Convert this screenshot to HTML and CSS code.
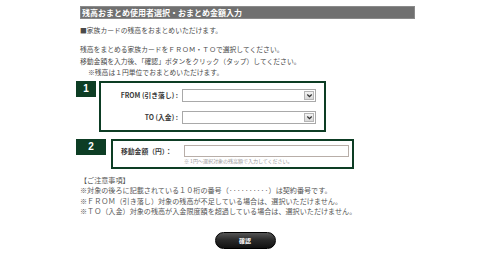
FILE: index.html
```html
<!DOCTYPE html>
<html lang="ja">
<head>
<meta charset="utf-8">
<title>残高おまとめ</title>
<link rel="stylesheet" href="styles.css">
</head>
<body>
<div class="page">
  <div class="content">
    <h1 class="title">残高おまとめ使用者選択・おまとめ金額入力</h1>
    <p class="lead">■家族カードの残高をおまとめいただけます。</p>
    <div class="intro">
      <p>残高をまとめる家族カードをＦＲＯＭ・ＴＯで選択してください。</p>
      <p>移動金額を入力後、「確認」ボタンをクリック（タップ）してください。</p>
      <p class="indent">※残高は１円単位でおまとめいただけます。</p>
    </div>

    <div class="step step1">
      <div class="badge badge1">1</div>
      <div class="box box1">
        <div class="row">
          <span class="label">FROM (引き落し) :</span>
          <div class="select"><span class="arrow"><svg viewBox="0 0 8 8" width="7" height="7"><path d="M1.5 2.8 L4 5.3 L6.5 2.8" fill="none" stroke="#333" stroke-width="1.5"/></svg></span></div>
        </div>
        <div class="row">
          <span class="label">TO (入金) :</span>
          <div class="select"><span class="arrow"><svg viewBox="0 0 8 8" width="7" height="7"><path d="M1.5 2.8 L4 5.3 L6.5 2.8" fill="none" stroke="#333" stroke-width="1.5"/></svg></span></div>
        </div>
      </div>
    </div>

    <div class="step step2">
      <div class="badge badge2">2</div>
      <div class="box box2">
        <div class="row2">
          <span class="label2">移動金額（円）：</span>
          <div class="field">
            <div class="input"></div>
            <div class="hint">※ 1円～選択対象の残高額で入力してください。</div>
          </div>
        </div>
      </div>
    </div>

    <div class="notes">
      <p>【ご注意事項】</p>
      <p>※対象の後ろに記載されている１０桁の番号（··········）は契約番号です。</p>
      <p>※ＦＲＯＭ（引き落し）対象の残高が不足している場合は、選択いただけません。</p>
      <p>※ＴＯ（入金）対象の残高が入金限度額を超過している場合は、選択いただけません。</p>
    </div>
  </div>
  <div class="actions">
    <button class="btn" type="button">確認</button>
  </div>
</div>
</body>
</html>
```
FILE: styles.css
```css
* { box-sizing: border-box; }
html, body { margin: 0; padding: 0; background: #fff; }
body {
  font-family: "Noto Sans CJK JP", "Noto Sans", "DejaVu Sans", sans-serif;
  color: #4a4a4a;
  width: 490px;
  height: 270px;
  overflow: hidden;
}
p { margin: 0; }
.page { padding-top: 6px; }
.content { margin-left: 76px; width: 360px; }
.title {
  margin: 0 0 0 4px;
  width: 335px;
  height: 13px;
  background: #707070;
  border: 1px solid #8a8a8a;
  color: #fff;
  font-size: 8px;
  font-weight: bold;
  line-height: 11px;
  padding-left: 1px;
}
.lead {
  margin: 6px 0 0 4px;
  font-size: 6.8px;
  line-height: 10px;
}
.intro {
  margin: 9px 0 0 4px;
  font-size: 6.8px;
  line-height: 11.5px;
}
.intro .indent { padding-left: 8px; }

.step { display: flex; align-items: flex-start; }
.step1 { margin-top: 2px; gap: 3px; }
.step2 { margin-top: 7px; gap: 5px; }
.badge {
  background: #0d3d24;
  color: #fff;
  font-family: "Liberation Sans", Arial, sans-serif;
  font-weight: bold;
  font-size: 10px;
  display: flex;
  align-items: center;
  justify-content: center;
  height: 16px;
}
.badge1 { width: 20px; }
.badge2 { width: 30px; }
.box { border: 2.5px solid #0d3d24; }
.box1 {
  width: 227px;
  height: 51px;
  display: flex;
  flex-direction: column;
  justify-content: center;
  gap: 9px;
}
.row { display: flex; align-items: center; gap: 4px; }
.label {
  width: 77px;
  text-align: right;
  font-size: 6.8px;
  font-weight: bold;
  color: #3a3a3a;
  line-height: 13px;
}
.select {
  width: 134px;
  height: 13px;
  border: 1px solid #a9a9a9;
  background: #fff;
  position: relative;
}
.arrow {
  position: absolute;
  right: 1px;
  top: 1px;
  width: 10px;
  height: 9px;
  background: linear-gradient(#f4f4f4, #d8d8d8);
  border: 1px solid #b5b5b5;
  display: flex;
  align-items: center;
  justify-content: center;
}
.box2 {
  width: 243px;
  height: 30px;
  padding-top: 4.5px;
}
.row2 { display: flex; align-items: flex-start; gap: 5px; }
.label2 {
  margin-left: 8px;
  width: 58px;
  font-size: 6.8px;
  font-weight: bold;
  color: #3a3a3a;
  line-height: 12px;
  white-space: nowrap;
}
.field { display: flex; flex-direction: column; }
.input {
  width: 165px;
  height: 12px;
  border: 1px solid #b8aea8;
  background: #fff;
}
.hint {
  font-size: 5px;
  color: #9a9a9a;
  line-height: 8px;
  white-space: nowrap;
}
.notes {
  margin: 6px 0 0 4px;
  font-size: 7.1px;
  line-height: 10.5px;
  white-space: nowrap;
  color: #555;
}
.actions {
  display: flex;
  justify-content: center;
  margin-top: 15px;
}
.btn {
  width: 61px;
  height: 17px;
  border: 1px solid #000;
  border-radius: 9px;
  background: linear-gradient(#555 0%, #2a2a2a 45%, #111 100%);
  color: #fff;
  font-family: "Noto Sans CJK JP", sans-serif;
  font-size: 6px;
  font-weight: bold;
  padding: 0;
  line-height: 15px;
}
```
